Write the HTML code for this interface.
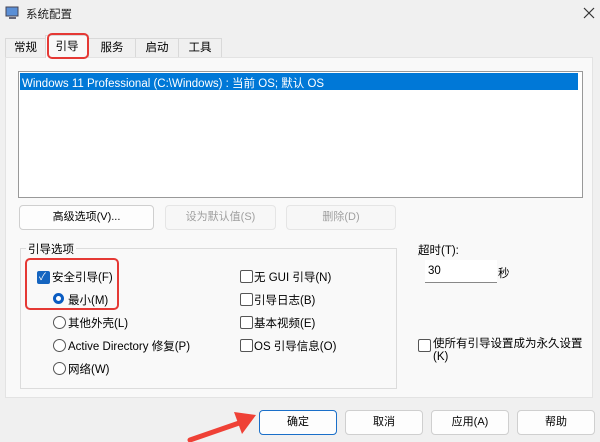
<html><head><style>
body{margin:0;width:600px;height:442px;background:#f0f0f0;font-family:"Liberation Sans","Noto Sans CJK SC",sans-serif;font-size:11.5px;color:#000;position:relative;overflow:hidden}
.a{position:absolute}
.tab{position:absolute;top:38px;height:19px;border:1px solid #d9d9d9;border-bottom:none;background:#f0f0f0;text-align:center;line-height:19px;box-sizing:border-box}
.btn{position:absolute;height:25px;border:1px solid #cfcfcf;border-radius:4px;background:#fdfdfd;text-align:center;line-height:23px;box-sizing:border-box;font-size:11px}
.dis{color:#a0a0a0;background:#f7f7f7;border-color:#e5e5e5}
.cb{position:absolute;width:11px;height:11px;border:1px solid #555;border-radius:2px;background:#fff}
.rb{position:absolute;width:11px;height:11px;border:1px solid #555;border-radius:50%;background:#fff}
.t{position:absolute;white-space:nowrap;font-size:11.5px}
</style></head><body>
<svg class="a" style="left:5px;top:6px" width="14" height="14"><rect x="1" y="1" width="12" height="9" fill="#5b8fd6" stroke="#445"/><rect x="4" y="11" width="7" height="2" fill="#667"/></svg>
<div class="t" style="left:26px;top:6px;color:#222">系统配置</div>
<svg class="a" style="left:583px;top:7px" width="12" height="12"><path d="M1 1L11 11M11 1L1 11" stroke="#333" stroke-width="1.2"/></svg>
<div class="a" style="left:5px;top:57px;width:588px;height:341px;background:#f9f9f9;border:1px solid #e3e3e3;box-sizing:border-box"></div>
<div class="tab" style="left:5px;width:41px">常规</div>
<div class="tab" style="left:45px;top:35px;height:23px;width:44px;background:#f9f9f9;line-height:22px">引导</div>
<div class="tab" style="left:88px;width:48px">服务</div>
<div class="tab" style="left:135px;width:44px">启动</div>
<div class="tab" style="left:178px;width:44px">工具</div>
<div class="a" style="left:47px;top:33px;width:42px;height:26px;border:2.5px solid #e53935;border-radius:5px;box-sizing:border-box"></div>
<div class="a" style="left:18px;top:71px;width:565px;height:127px;background:#fff;border:1px solid #999;box-sizing:border-box"></div>
<div class="a" style="left:20px;top:73px;width:558px;height:17px;background:#0078d7"></div>
<div class="t" style="left:22px;top:75px;color:#fff">Windows 11 Professional (C:\Windows) : 当前 OS; 默认 OS</div>
<div class="btn" style="left:19px;top:205px;width:135px">高级选项(V)...</div>
<div class="btn dis" style="left:165px;top:205px;width:111px">设为默认值(S)</div>
<div class="btn dis" style="left:286px;top:205px;width:110px">删除(D)</div>
<div class="a" style="left:20px;top:248px;width:377px;height:141px;border:1px solid #dcdcdc;box-sizing:border-box"></div>
<div class="t" style="left:26px;top:241px;background:#f9f9f9;padding:0 2px">引导选项</div>
<div class="cb" style="left:37px;top:271px;background:#1565c0;border-color:#1565c0"></div>
<div class="t" style="left:39px;top:268px;color:#fff;font-size:10px">✓</div>
<div class="t" style="left:52px;top:269px">安全引导(F)</div>
<div class="rb" style="left:53px;top:293px;border:3.5px solid #0a5cc2;width:5px;height:5px"></div>
<div class="t" style="left:68px;top:292px">最小(M)</div>
<div class="rb" style="left:53px;top:316px"></div><div class="t" style="left:68px;top:315px">其他外壳(L)</div>
<div class="rb" style="left:53px;top:339px"></div><div class="t" style="left:68px;top:338px">Active Directory 修复(P)</div>
<div class="rb" style="left:53px;top:362px"></div><div class="t" style="left:68px;top:361px">网络(W)</div>
<div class="a" style="left:25px;top:258px;width:94px;height:52px;border:2.5px solid #e53935;border-radius:5px;box-sizing:border-box"></div>
<div class="cb" style="left:240px;top:270px"></div><div class="t" style="left:254px;top:269px">无 GUI 引导(N)</div>
<div class="cb" style="left:240px;top:293px"></div><div class="t" style="left:254px;top:292px">引导日志(B)</div>
<div class="cb" style="left:240px;top:316px"></div><div class="t" style="left:254px;top:315px">基本视频(E)</div>
<div class="cb" style="left:240px;top:339px"></div><div class="t" style="left:254px;top:338px">OS 引导信息(O)</div>
<div class="t" style="left:418px;top:242px">超时(T):</div>
<div class="a" style="left:425px;top:260px;width:72px;height:23px;background:#fff;border-bottom:1px solid #888;box-sizing:border-box"></div>
<div class="t" style="left:428px;top:265px">30</div>
<div class="t" style="left:498px;top:265px">秒</div>
<div class="cb" style="left:418px;top:339px"></div>
<div class="t" style="left:433px;top:335px">使所有引导设置成为永久设置</div>
<div class="t" style="left:433px;top:351px">(K)</div>
<div class="btn" style="left:259px;top:410px;width:78px;border:1px solid #1a6fc9">确定</div>
<div class="btn" style="left:345px;top:410px;width:78px">取消</div>
<div class="btn" style="left:431px;top:410px;width:78px">应用(A)</div>
<div class="btn" style="left:517px;top:410px;width:78px">帮助</div>
<svg class="a" style="left:180px;top:400px" width="80" height="42"><line x1="10" y1="40" x2="62" y2="22" stroke="#ef4136" stroke-width="5" stroke-linecap="round"/><polygon points="76,15 54,12 62,34" fill="#ef4136"/></svg>
</body></html>
